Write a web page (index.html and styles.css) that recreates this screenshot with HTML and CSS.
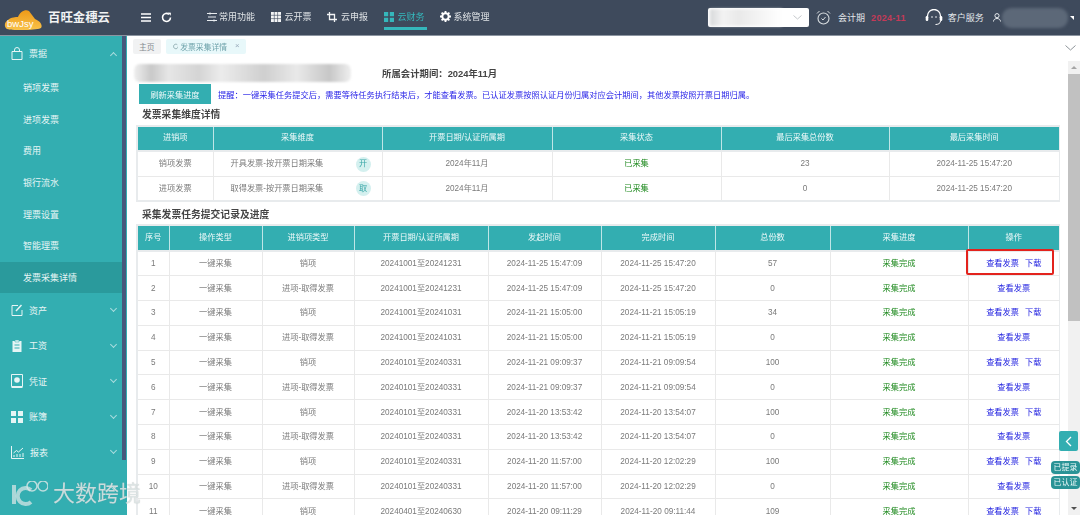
FILE: index.html
```html
<!DOCTYPE html>
<html lang="zh-CN">
<head>
<meta charset="utf-8">
<title>发票采集详情</title>
<link rel="stylesheet" href="styles.css">
</head>
<body>
<div class="app">
  <header class="hdr">
    <div class="logo">
      <svg width="38" height="22" viewBox="0 0 38 22"><defs><linearGradient id="lg" x1="0" y1="0" x2="0" y2="1"><stop offset="0" stop-color="#ef9a18"/><stop offset="1" stop-color="#f8c24a"/></linearGradient></defs><path d="M3 21C0 19 0 14 4 12 7 9 12 9 14 9 16 4 21 1 25 3 27 6 29 8 31 11 36 13 39 17 37 20 35 22 8 23 3 21Z" fill="url(#lg)"/><text x="3" y="19" class="logo-t">bwJsy</text></svg>
    </div>
    <div class="brand">百旺金穗云</div>
    <svg class="ic ic-menu" width="10" height="9" viewBox="0 0 10 9"><path d="M0 1h10M0 4.500h10M0 8h10" stroke="#fff" stroke-width="1.400"/></svg>
    <svg class="ic ic-ref" width="11" height="11" viewBox="0 0 11 11"><path d="M9.500 5.500A4 4 0 1 1 8 2.300" fill="none" stroke="#fff" stroke-width="1.600"/><path d="M7 .5l3 .2-.4 3z" fill="#fff"/></svg>
    <nav class="nav">
      <a class="nav-i n1"><svg width="10" height="10" viewBox="0 0 10 10"><path d="M0 1.500h10M1 5h8M0 8.500h10" stroke="#e8ecef" stroke-width="1.200"/><circle cx="3" cy="1.500" r="1" fill="#e8ecef"/><circle cx="7" cy="8.500" r="1" fill="#e8ecef"/></svg>常用功能</a>
      <a class="nav-i n2"><svg width="10" height="10" viewBox="0 0 10 10"><path d="M0 0h10v10H0z" fill="#f2f4f5"/><path d="M0 3.300h10M0 6.600h10M3.300 0v10M6.600 0v10" stroke="#3e4a5c" stroke-width=".6"/></svg>云开票</a>
      <a class="nav-i n3"><svg width="10" height="10" viewBox="0 0 10 10"><path d="M2.500 0v7.500H10M0 2.500h7.500V10" fill="none" stroke="#f2f4f5" stroke-width="1.300"/></svg>云申报</a>
      <a class="nav-i n4 on"><svg width="10" height="10" viewBox="0 0 10 10"><path d="M0 0h4.200v4.200H0zM5.800 0H10v4.200H5.800zM0 5.800h4.200V10H0zM5.800 5.800H10V10H5.800z" fill="#35b7bb"/></svg>云财务</a>
      <a class="nav-i n5"><svg width="11" height="11" viewBox="0 0 11 11"><circle cx="5.500" cy="5.500" r="3.200" fill="none" stroke="#fff" stroke-width="2"/><path d="M5.500 0v2M5.500 9v2M0 5.500h2M9 5.500h2M1.600 1.600l1.400 1.400M8 8l1.400 1.400M1.600 9.400L3 8M8 3l1.400-1.400" stroke="#fff" stroke-width="1.800"/></svg>系统管理</a>
    </nav>
    <div class="sel"><span class="sel-blur"></span><svg width="9" height="5" viewBox="0 0 9 5"><path d="M.5.500l4 3.500 4-3.500" fill="none" stroke="#c6c9cc"/></svg></div>
    <svg class="ic ic-clock" width="15" height="15" viewBox="0 0 15 15"><circle cx="7.500" cy="8.500" r="5.500" fill="none" stroke="#d8dde0" stroke-width="1.100"/><path d="M5.500 8.500l1.500 1.500 2.500-3M1 3.500L3.500 1M14 3.500L11.500 1" fill="none" stroke="#d8dde0"/></svg>
    <span class="per-l">会计期</span><span class="per-v">2024-11</span>
    <svg class="ic ic-head" width="18" height="17" viewBox="0 0 18 17"><path d="M2.500 9V7a6.500 6.500 0 0 1 13 0v2" fill="none" stroke="#fff" stroke-width="1.300"/><rect x="0.700" y="7" width="2.600" height="5" rx="1.300" fill="#fff"/><rect x="14.700" y="7" width="2.600" height="5" rx="1.300" fill="#fff"/><path d="M15.500 12c0 2.500-2.500 3.500-5 3.500" fill="none" stroke="#fff"/><circle cx="7" cy="8" r=".8" fill="#fff"/><circle cx="11" cy="8" r=".8" fill="#fff"/></svg>
    <span class="svc">客户服务</span>
    <svg class="ic ic-user" width="8" height="9" viewBox="0 0 8 9"><circle cx="4" cy="2.700" r="2.100" fill="none" stroke="#e8ecef"/><path d="M.5 8.500c0-4 7-4 7 0" fill="none" stroke="#e8ecef"/></svg>
    <span class="usr"></span>
    <span class="caret"></span>
  </header>
  <div class="body">
    <aside class="side">
      <div class="sm"><svg width="12" height="13" viewBox="0 0 12 13"><path d="M1 4.500h10v8H1zM3.500 4.500V3a2.500 2.500 0 0 1 5 0v1.500" fill="none" stroke="#e6f5f5"/></svg><span>票据</span><i class="chev up"></i></div>
      <a class="si">销项发票</a>
      <a class="si">进项发票</a>
      <a class="si">费用</a>
      <a class="si">银行流水</a>
      <a class="si">理票设置</a>
      <a class="si">智能理票</a>
      <a class="si act">发票采集详情</a>
      <div class="sm m2"><svg width="12" height="12" viewBox="0 0 12 12"><path d="M7 1.500H1v10h10V6" fill="none" stroke="#e6f5f5"/><path d="M5 7l5.500-6" stroke="#e6f5f5" stroke-width="1.500"/></svg><span>资产</span><i class="chev"></i></div>
      <div class="sm m3"><svg width="12" height="13" viewBox="0 0 12 13"><path d="M1.500 2h9v11h-9z" fill="#e6f5f5"/><path d="M4 1h4v2H4z" fill="#e6f5f5" stroke="#33aeb1" stroke-width=".5"/><path d="M3.500 6h5M3.500 9h5" stroke="#33aeb1"/></svg><span>工资</span><i class="chev"></i></div>
      <div class="sm m3"><svg width="12" height="14" viewBox="0 0 12 14"><path d="M.5.500h11v12H.5z" fill="none" stroke="#e6f5f5"/><circle cx="6" cy="6" r="2.800" fill="#e6f5f5"/><path d="M.5 12.500h11V14H.5z" fill="#e6f5f5"/></svg><span>凭证</span><i class="chev"></i></div>
      <div class="sm m3"><svg width="12" height="12" viewBox="0 0 12 12"><path d="M0 0h5v5H0zM7 0h5v5H7zM0 7h5v5H0zM7 7h5v5H7z" fill="#e6f5f5"/></svg><span>账簿</span><i class="chev"></i></div>
      <div class="sm m3"><svg width="13" height="13" viewBox="0 0 13 13"><path d="M.5 0v12.500H13" fill="none" stroke="#e6f5f5"/><path d="M2.500 7l3-2.500 2 1.500L12 2" fill="none" stroke="#e6f5f5"/><path d="M3 11V9M6 11V8M9 11V8M12 11V7" stroke="#e6f5f5"/></svg><span>报表</span><i class="chev"></i></div>
      <div class="sm m3"><span class="blank"></span><span></span><i class="chev"></i></div>
    </aside>
    <div class="strip"><div class="strip-th"></div></div>
    <main class="main">
      <div class="tabs">
        <span class="tab">主页</span>
        <span class="tab cur"><svg width="7" height="7" viewBox="0 0 7 7"><path d="M6.300 3.500A2.800 2.800 0 1 1 5.300 1.300" fill="none" stroke="#6b8d93" stroke-width=".8"/></svg>发票采集详情<b class="x">×</b></span>
        <svg class="tab-more" width="11" height="6" viewBox="0 0 11 6"><path d="M.5.500l5 4.500 5-4.500" fill="none" stroke="#8e9499"/></svg>
      </div>
      <div class="view">
        <div class="pane">
          <div class="titlebar"><span class="co"></span><span class="period">所属会计期间：2024年11月</span></div>
          <div class="tools"><button class="btn">刷新采集进度</button><span class="notice">提醒：一键采集任务提交后，需要等待任务执行结束后，才能查看发票。已认证发票按照认证月份归属对应会计期间，其他发票按照开票日期归属。</span></div>
          <h3 class="sec">发票采集维度详情</h3>
          <table class="tb">
            <colgroup><col class="a1"><col class="a2"><col class="a3"><col class="a4"><col class="a5"><col class="a6"></colgroup>
            <thead><tr><th>进销项</th><th>采集维度</th><th>开票日期/认证所属期</th><th>采集状态</th><th>最后采集总份数</th><th>最后采集时间</th></tr></thead>
            <tbody>
              <tr><td>销项发票</td><td><div class="dim"><span>开具发票-按开票日期采集</span><em class="bdg">开</em></div></td><td>2024年11月</td><td class="ok">已采集</td><td>23</td><td>2024-11-25 15:47:20</td></tr>
              <tr><td>进项发票</td><td><div class="dim"><span>取得发票-按开票日期采集</span><em class="bdg">取</em></div></td><td>2024年11月</td><td class="ok">已采集</td><td>0</td><td>2024-11-25 15:47:20</td></tr>
            </tbody>
          </table>
          <h3 class="sec s2">采集发票任务提交记录及进度</h3>
          <table class="tb t2">
            <colgroup><col class="b1"><col class="b2"><col class="b3"><col class="b4"><col class="b5"><col class="b6"><col class="b7"><col class="b8"><col class="b9"></colgroup>
            <thead><tr><th>序号</th><th>操作类型</th><th>进销项类型</th><th>开票日期/认证所属期</th><th>发起时间</th><th>完成时间</th><th>总份数</th><th>采集进度</th><th>操作</th></tr></thead>
            <tbody>
              <tr><td>1</td><td>一键采集</td><td>销项</td><td>20241001至20241231</td><td>2024-11-25 15:47:09</td><td>2024-11-25 15:47:20</td><td>57</td><td class="ok">采集完成</td><td class="ops mark"><a>查看发票</a><a>下载</a></td></tr>
              <tr><td>2</td><td>一键采集</td><td>进项-取得发票</td><td>20241001至20241231</td><td>2024-11-25 15:47:09</td><td>2024-11-25 15:47:20</td><td>0</td><td class="ok">采集完成</td><td class="ops"><a>查看发票</a></td></tr>
              <tr><td>3</td><td>一键采集</td><td>销项</td><td>20241001至20241031</td><td>2024-11-21 15:05:00</td><td>2024-11-21 15:05:19</td><td>34</td><td class="ok">采集完成</td><td class="ops"><a>查看发票</a><a>下载</a></td></tr>
              <tr><td>4</td><td>一键采集</td><td>进项-取得发票</td><td>20241001至20241031</td><td>2024-11-21 15:05:00</td><td>2024-11-21 15:05:19</td><td>0</td><td class="ok">采集完成</td><td class="ops"><a>查看发票</a></td></tr>
              <tr><td>5</td><td>一键采集</td><td>销项</td><td>20240101至20240331</td><td>2024-11-21 09:09:37</td><td>2024-11-21 09:09:54</td><td>100</td><td class="ok">采集完成</td><td class="ops"><a>查看发票</a><a>下载</a></td></tr>
              <tr><td>6</td><td>一键采集</td><td>进项-取得发票</td><td>20240101至20240331</td><td>2024-11-21 09:09:37</td><td>2024-11-21 09:09:54</td><td>0</td><td class="ok">采集完成</td><td class="ops"><a>查看发票</a></td></tr>
              <tr><td>7</td><td>一键采集</td><td>销项</td><td>20240101至20240331</td><td>2024-11-20 13:53:42</td><td>2024-11-20 13:54:07</td><td>100</td><td class="ok">采集完成</td><td class="ops"><a>查看发票</a><a>下载</a></td></tr>
              <tr><td>8</td><td>一键采集</td><td>进项-取得发票</td><td>20240101至20240331</td><td>2024-11-20 13:53:42</td><td>2024-11-20 13:54:07</td><td>0</td><td class="ok">采集完成</td><td class="ops"><a>查看发票</a></td></tr>
              <tr><td>9</td><td>一键采集</td><td>销项</td><td>20240101至20240331</td><td>2024-11-20 11:57:00</td><td>2024-11-20 12:02:29</td><td>100</td><td class="ok">采集完成</td><td class="ops"><a>查看发票</a><a>下载</a></td></tr>
              <tr><td>10</td><td>一键采集</td><td>进项-取得发票</td><td>20240101至20240331</td><td>2024-11-20 11:57:00</td><td>2024-11-20 12:02:29</td><td>0</td><td class="ok">采集完成</td><td class="ops"><a>查看发票</a></td></tr>
              <tr><td>11</td><td>一键采集</td><td>销项</td><td>20240401至20240630</td><td>2024-11-20 09:11:29</td><td>2024-11-20 09:11:44</td><td>109</td><td class="ok">采集完成</td><td class="ops"><a>查看发票</a><a>下载</a></td></tr>
            </tbody>
          </table>
        </div>
        <div class="sb"><span class="arr-u"></span><div class="thumb"></div><span class="arr-d"></span></div>
      </div>
    </main>
  </div>
  <button class="fold"><svg width="7" height="11" viewBox="0 0 7 11"><path d="M6 1L1.500 5.500 6 10" fill="none" stroke="#fff" stroke-width="1.300"/></svg></button>
  <span class="flag f1">已提录</span>
  <span class="flag f2">已认证</span>
  <div class="wm">
    <svg width="38" height="26" viewBox="0 0 38 26"><path d="M4 4v19" stroke="#dfe8e8" stroke-width="4" opacity=".7"/><path d="M21 9A8 8 0 1 0 21 21" fill="none" stroke="#dfe8e8" stroke-width="4" opacity=".7"/><circle cx="22" cy="5" r="5" fill="none" stroke="#dfe8e8" stroke-width="1.500" opacity=".8"/><circle cx="33" cy="5" r="5" fill="none" stroke="#dfe8e8" stroke-width="1.500" opacity=".8"/></svg>
    <span>大数跨境</span>
  </div>
</div>
</body>
</html>
```
FILE: styles.css
```css
* { box-sizing: border-box; }
html, body { margin: 0; height: 100%; overflow: hidden; background: #fff; }
body { font-family: "Liberation Sans", "Noto Sans CJK SC", sans-serif; font-size: 8.2px; color: #7a7a7a; }
.app { position: relative; width: 1080px; height: 515px; overflow: hidden; display: flex; flex-direction: column; filter: blur(.4px); }

.hdr { height: 36px; flex: none; background: #3e4a5c; border-bottom: 1px solid #8c95a1; display: flex; align-items: center; color: #e3e7ea; font-size: 9px; white-space: nowrap; }
.hdr > * { flex: none; }
.logo { margin-left: 4px; width: 38px; height: 22px; margin-top: 2px; }
.logo svg { display: block; }
.logo-t { font: 9.500px "Liberation Sans", sans-serif; fill: #fff; }
.brand { margin-left: 6px; width: 80px; font-size: 12.400px; font-weight: 700; color: #f1f3f4; margin-bottom: 1px; }
.ic { display: block; }
.ic-menu { margin-left: 13px; }
.ic-ref { margin-left: 10px; }
.nav { display: flex; align-items: center; height: 100%; margin-left: 35px; }
.nav-i { display: flex; align-items: center; gap: 4px; height: 100%; margin-right: 15.500px; position: relative; color: #dfe3e6; white-space: nowrap; padding-bottom: 2px; }
.nav-i.n1 { gap: 2px; }
.nav-i.n5 { gap: 3px; }
.nav-i.on { color: #35b7bb; margin-right: 13px; padding-right: 2px; }
.nav-i.on::after { content: ""; position: absolute; left: 0; right: 0; bottom: 5px; height: 3px; background: #35b7bb; }
.sel { margin-left: 203px; width: 101px; height: 19px; background: #fff; border-radius: 2px; display: flex; align-items: center; justify-content: space-between; padding-right: 7px; }
.sel-blur { width: 72px; height: 17px; margin-left: 2px; background: linear-gradient(90deg, #d7d9da, #f3f3f3 18%, #e9e9e9 40%, #f4f4f4 70%, #fff); filter: blur(1.500px); }
.ic-clock { margin-left: 7px; }
.per-l { margin-left: 7px; }
.per-v { margin-left: 6px; color: #c43a58; font-weight: 700; font-size: 9px; letter-spacing: .3px; }
.ic-head { margin-left: 19px; }
.svc { margin-left: 5px; }
.ic-user { margin-left: 9px; }
.usr { margin-left: 1px; width: 66px; height: 20px; border-radius: 9px; background: #5c6878; filter: blur(1.500px); }
.caret { margin-left: 2px; width: 0; height: 0; border-left: 4px solid transparent; border-top: 4px solid #fff; }

.body { flex: 1; display: flex; min-height: 0; }
.side { width: 122px; flex: none; background: #33aeb1; color: #e6f5f5; font-size: 9px; }
.sm { height: 35.500px; display: flex; align-items: center; padding-left: 11px; position: relative; gap: 6px; }
.sm svg { flex: none; }
.m2 { margin-top: -1px; }
.blank { width: 12px; }
.chev { position: absolute; right: 6px; top: 50%; width: 5px; height: 5px; margin-top: -4px; border-right: 1px solid #a9dcdd; border-bottom: 1px solid #a9dcdd; transform: rotate(45deg); }
.chev.up { margin-top: -1px; transform: rotate(225deg); }
.si { display: flex; align-items: center; height: 31.700px; padding-left: 23px; }
.si.act { background: #2a9a9c; }
.strip { width: 5px; flex: none; background: #33aeb1; }
.strip-th { width: 4px; height: 424px; background: #46587c; }

.main { flex: 1; min-width: 0; display: flex; flex-direction: column; }
.tabs { height: 24px; flex: none; display: flex; align-items: center; padding-left: 6px; gap: 5px; position: relative; padding-bottom: 3px; }
.tab { height: 15px; display: flex; align-items: center; padding: 0 6px; background: #f1f2f3; border-radius: 2px; font-size: 7.800px; color: #858a8e; white-space: nowrap; }
.tab.cur { background: #e8f8fa; color: #6fa3ab; gap: 2px; width: 80px; padding-left: 7px; }
.x { font-weight: 400; margin-left: 6px; color: #9ab; margin-top: -3px; }
.tab-more { position: absolute; right: 4px; top: 9px; }
.view { flex: 1; min-height: 0; display: flex; }
.pane { flex: 1; min-width: 0; overflow: hidden; padding-left: 9px; }
.titlebar { height: 24px; display: flex; align-items: center; margin-left: -2px; padding-top: 2px; }
.co { width: 217px; height: 18px; border-radius: 6px; background: linear-gradient(90deg, #efefef, #c9c9c9 8%, #e6e6e6 16%, #d4d4d4 30%, #ececec 40%, #cfcfcf 60%, #e9e9e9 75%, #c7c7c7 90%, #efefef); filter: blur(1.200px); flex: none; }
.period { margin-left: 31px; font-size: 9.400px; font-weight: 700; color: #444; white-space: nowrap; }
.tools { height: 20px; display: flex; align-items: center; margin-left: 3px; }
.btn { width: 72px; height: 20px; border: 0; padding: 0; background: #33aeb1; color: #eef9f9; font: inherit; font-size: 8.200px; flex: none; }
.notice { margin-left: 7px; color: #2b26e8; white-space: nowrap; font-size: 8.250px; }
.sec { margin: 0; height: 21px; line-height: 21px; padding-left: 6px; font-size: 9.800px; font-weight: 700; color: #444; }
.s2 { height: 22px; line-height: 25px; }
.tb { width: 923px; border-collapse: collapse; table-layout: fixed; border: 2px solid #e8ebed; text-align: center; line-height: 10px; }
.tb th { height: 25px; padding: 0 0 1px; background: #33aeb1; color: #eef9f9; font-weight: 400; border: 1px solid #bfe6e7; border-top: 0; border-bottom: 2px solid #e8ebed; }
.tb td { height: 25px; padding: 1px 0 0; border: 1px solid #e9e9e9; white-space: nowrap; }
.t2 th { height: 26px; padding: 0; }
.t2 td { height: 24.800px; }
.a1 { width: 76px; } .a2 { width: 169px; } .a3 { width: 170px; } .a4 { width: 169px; } .a5 { width: 168px; } .a6 { width: 171px; }
.b1 { width: 32px; } .b2 { width: 93px; } .b3 { width: 92px; } .b4 { width: 134px; } .b5 { width: 113px; } .b6 { width: 114px; } .b7 { width: 115px; } .b8 { width: 138px; } .b9 { width: 92px; }
.dim { display: flex; align-items: center; justify-content: space-between; padding: 0 11px 0 17px; }
.bdg { width: 15px; height: 15px; border-radius: 50%; background: #d4f0ef; color: #3aa7a8; font-style: normal; display: flex; align-items: center; justify-content: center; }
.ok { color: #1f8a1f; }
.ops a { color: #2222e0; margin: 0 3px; }
.mark { position: relative; }
.mark::after { content: ""; position: absolute; left: -3px; right: 5px; top: -3px; bottom: 0; border: 2px solid #e3231d; border-radius: 2px; }

.sb { width: 12px; flex: none; background: #f1f1f1; margin-left: 8px; display: flex; flex-direction: column; align-items: center; margin-top: 1px; }
.arr-u { margin-top: 5px; border: 3px solid transparent; border-bottom: 3px solid #a5a5a5; border-top: 0; }
.thumb { width: 100%; height: 247px; margin-top: 5px; background: #c1c1c1; }
.arr-d { margin-top: auto; margin-bottom: 5px; border: 3px solid transparent; border-top: 3px solid #505050; border-bottom: 0; }

.fold { position: absolute; left: 1059px; top: 431px; width: 19px; height: 20px; padding: 0; border: 0; border-radius: 2px; background: #33aeb1; display: flex; align-items: center; justify-content: center; }
.flag { position: absolute; left: 1051px; width: 29px; height: 13px; line-height: 13px; border-radius: 4px; background: #2a9396; color: #eaf8f8; font-size: 8px; text-align: center; }
.f1 { top: 461px; }
.f2 { top: 476px; }
.wm { position: absolute; left: 10px; top: 480px; display: flex; align-items: center; gap: 5px; color: rgba(222,230,230,.85); font-size: 22px; line-height: 28px; text-shadow: 0 0 1px rgba(140,140,140,.4); }
.wm svg { flex: none; }
```
